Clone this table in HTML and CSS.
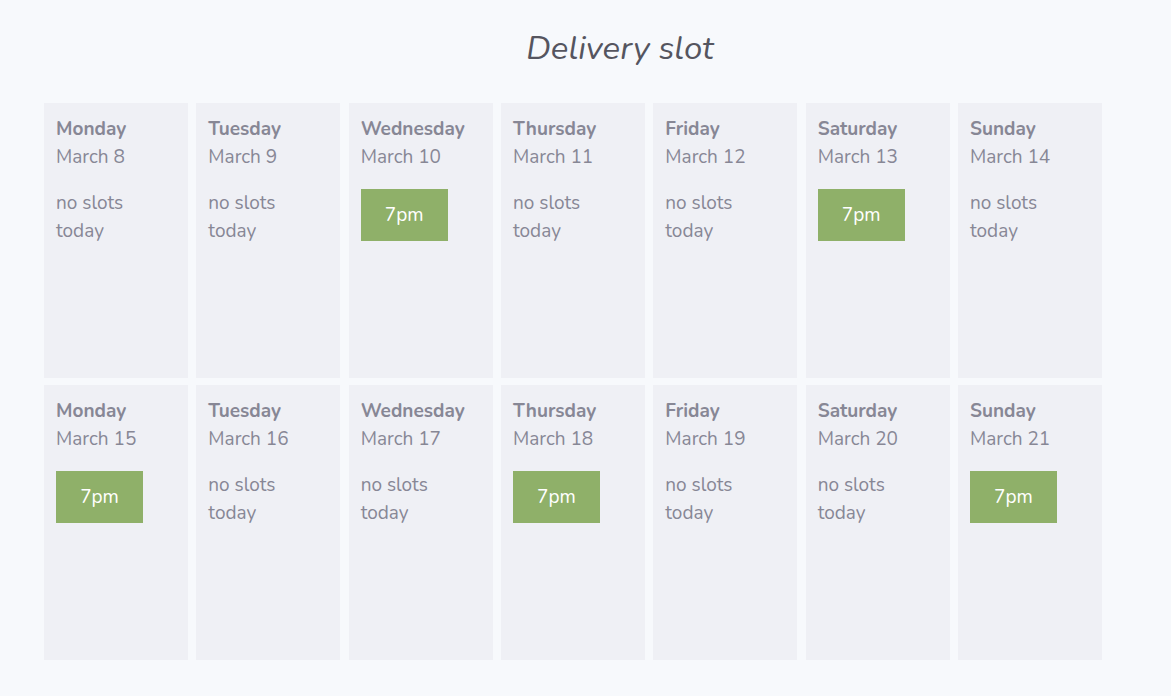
FILE: index.html
```html
<!DOCTYPE html>
<html lang="en">
<head>
<meta charset="utf-8">
<title>Delivery slot</title>
<link rel="stylesheet" href="styles.css">
</head>
<body>
<main class="page">
  <h1 class="title">Delivery slot</h1>
  <div class="grid">
    <div class="day"><div class="name">Monday</div><div class="date">March 8</div><div class="none">no slots today</div></div>
    <div class="day"><div class="name">Tuesday</div><div class="date">March 9</div><div class="none">no slots today</div></div>
    <div class="day"><div class="name">Wednesday</div><div class="date">March 10</div><button class="slot">7pm</button></div>
    <div class="day"><div class="name">Thursday</div><div class="date">March 11</div><div class="none">no slots today</div></div>
    <div class="day"><div class="name">Friday</div><div class="date">March 12</div><div class="none">no slots today</div></div>
    <div class="day"><div class="name">Saturday</div><div class="date">March 13</div><button class="slot">7pm</button></div>
    <div class="day"><div class="name">Sunday</div><div class="date">March 14</div><div class="none">no slots today</div></div>
    <div class="day"><div class="name">Monday</div><div class="date">March 15</div><button class="slot">7pm</button></div>
    <div class="day"><div class="name">Tuesday</div><div class="date">March 16</div><div class="none">no slots today</div></div>
    <div class="day"><div class="name">Wednesday</div><div class="date">March 17</div><div class="none">no slots today</div></div>
    <div class="day"><div class="name">Thursday</div><div class="date">March 18</div><button class="slot">7pm</button></div>
    <div class="day"><div class="name">Friday</div><div class="date">March 19</div><div class="none">no slots today</div></div>
    <div class="day"><div class="name">Saturday</div><div class="date">March 20</div><div class="none">no slots today</div></div>
    <div class="day"><div class="name">Sunday</div><div class="date">March 21</div><button class="slot">7pm</button></div>
  </div>
</main>
</body>
</html>
```
FILE: styles.css
```css
html, body {
  margin: 0;
  padding: 0;
  background: #f7f9fc;
}
body {
  font-family: "Nunito", Lato, "Open Sans", sans-serif;
  color: #878795;
}
.page {
  padding: 0 69px 0 44px;
}
.title {
  margin: 0;
  padding-top: 27px;
  padding-left: 94px;
  height: 103px;
  box-sizing: border-box;
  text-align: center;
  font-size: 33px;
  font-weight: 400;
  font-style: italic;
  line-height: 44px;
  color: #55555f;
}
.grid {
  display: grid;
  grid-template-columns: repeat(7, 1fr);
  column-gap: 8.3px;
  row-gap: 7px;
  width: 1058px;
}
.day {
  background: #eff0f5;
  height: 275px;
  box-sizing: border-box;
  padding: 12px 12px;
  font-size: 19px;
  line-height: 28px;
}
.name {
  font-weight: 700;
}
.none {
  margin-top: 18px;
  width: 80px;
}
.slot {
  display: block;
  margin-top: 18px;
  width: 87px;
  height: 52px;
  border: 0;
  padding: 0;
  background: #8fb069;
  color: #ffffff;
  font-family: inherit;
  font-size: 19px;
  cursor: pointer;
}
```
